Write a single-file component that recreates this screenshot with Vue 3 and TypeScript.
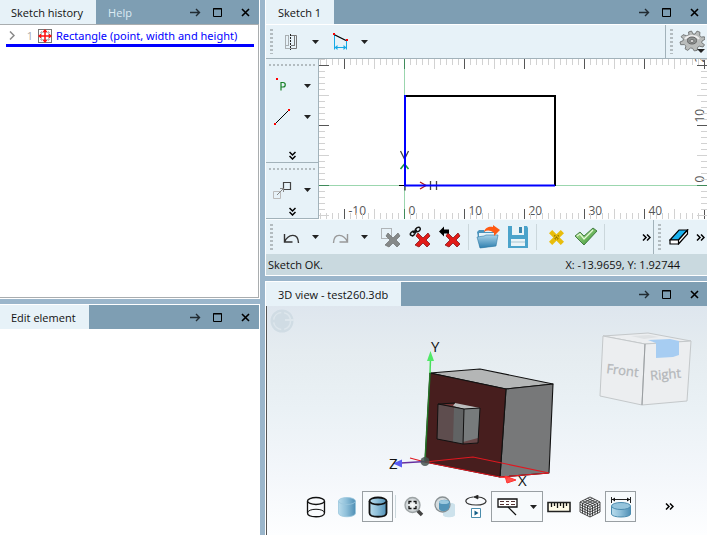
<script setup lang="ts">
import { computed, onMounted, onUnmounted, ref } from 'vue'

interface Tick {
  at: number
  size: number
  kind: string
  label: string
}

// One drawing unit spans six pixels on both rulers.
const unit = 6
const originX = 85.5
const originY = 126.5

const canvas = ref<SVGSVGElement | null>(null)
const canvasWidth = ref(388)

function measure() {
  if (canvas.value) canvasWidth.value = canvas.value.clientWidth
}

onMounted(() => {
  measure()
  window.addEventListener('resize', measure)
})
onUnmounted(() => window.removeEventListener('resize', measure))

function ruler(from: number, to: number, origin: number, direction: number): Tick[] {
  const ticks: Tick[] = []
  for (let n = from; n <= to; n++) {
    const major = n % 10 === 0
    ticks.push({
      at: origin + direction * n * unit,
      size: n % 5 === 0 ? 10 : 6,
      kind: n === 0 ? 'tick zero' : major ? 'tick major' : 'tick',
      label: major ? String(n) : '',
    })
  }
  return ticks
}

// A number is only written where the whole of it fits beside its tick.
const across = computed(() =>
  ruler(-14, Math.floor((canvasWidth.value - originX) / unit), originX, 1).map((t) =>
    t.at + 24 > canvasWidth.value ? { ...t, label: '' } : t,
  ),
)
const upward = ruler(-5, 21, originY, -1)

const windowActions = [
  { name: 'Move', icon: '#i-arrow' },
  { name: 'Maximize', icon: '#i-max' },
  { name: 'Close', icon: '#i-close' },
]

const editActions = [
  { name: 'Delete selection', icon: '#i-del-sel' },
  { name: 'Delete constraints', icon: '#i-del-link' },
  { name: 'Delete last', icon: '#i-del-back' },
]
</script>

<template>
  <svg class="symbols" width="0" height="0" aria-hidden="true">
    <defs>
      <linearGradient id="g-cyl"><stop offset="0" stop-color="#b9dcec" /><stop offset=".45" stop-color="#8fc0da" /><stop offset="1" stop-color="#4f8fb5" /></linearGradient>
      <linearGradient id="g-blue" x2="0" y2="1"><stop offset="0" stop-color="#a9d3ea" /><stop offset="1" stop-color="#2e7fae" /></linearGradient>
      <linearGradient id="g-green" x2="1" y2="1"><stop offset="0" stop-color="#b8e69a" /><stop offset="1" stop-color="#2f8f2c" /></linearGradient>
      <radialGradient id="g-lens"><stop offset="0" stop-color="#fff" /><stop offset="1" stop-color="#c3cacd" /></radialGradient>
    </defs>
    <symbol id="i-arrow" viewBox="0 0 11 11"><path d="M0 5.5h9M6 2l3.5 3.5L6 9" fill="none" stroke="#222c33" stroke-width="1.4" /></symbol>
    <symbol id="i-max" viewBox="0 0 11 11"><path d="M1.5 1.5h8v8h-8zM1 2h9" fill="none" stroke="#000" /></symbol>
    <symbol id="i-close" viewBox="0 0 11 11"><path d="M2 2l7 7M9 2L2 9" stroke="#000" stroke-width="1.6" /></symbol>
    <symbol id="i-caret" viewBox="0 0 7 4"><path d="M0 0h7L3.5 4z" fill="#222" /></symbol>
    <symbol id="i-more" viewBox="0 0 9 7"><path d="M1 .5l3 3-3 3M5 .5l3 3-3 3" fill="none" stroke="#000" stroke-width="1.5" /></symbol>
    <symbol id="i-down" viewBox="0 0 7 9"><path d="M.5 1l3 3 3-3M.5 5l3 3 3-3" fill="none" stroke="#000" stroke-width="1.5" /></symbol>
    <symbol id="i-cross" viewBox="0 0 14 14"><path d="M3 0l4 4 4-4 3 3-4 4 4 4-3 3-4-4-4 4-3-3 4-4-4-4z" fill="currentColor" /><path d="M5 5l4 4M9 5l-4 4" stroke="#8f7400" stroke-width="1.5" stroke-dasharray="1 1" /></symbol>
    <symbol id="i-del-sel" viewBox="0 0 22 22">
      <path d="M2.5 2.500h10v10h-10z" fill="none" stroke="#777" stroke-dasharray="1 1" />
      <path d="M9 7l5 5 5-5 2 3-4 4 4 4-3 3-4-4-4 4-4-2 5-5-4-4z" fill="#858989" stroke="#6b6f6f" stroke-width=".7" />
    </symbol>
    <symbol id="i-del-link" viewBox="0 0 22 22">
      <path d="M9 7l5 5 5-5 2 3-4 4 4 4-3 3-4-4-4 4-4-2 5-5-4-4z" fill="#e11b18" stroke="#851515" stroke-width=".8" />
      <path d="M1.500 9c-1-2 2-4 4-4 2 1 0 4-2 5zM6 5c0-3 4-5 5-3s-1 4-4 4M4 7l4-3" fill="none" stroke="#111" stroke-width="1.5" />
    </symbol>
    <symbol id="i-del-back" viewBox="0 0 22 22">
      <path d="M9 7l5 5 5-5 2 3-4 4 4 4-3 3-4-4-4 4-4-2 5-5-4-4z" fill="#e11b18" stroke="#851515" stroke-width=".8" />
      <path d="M0 5.500l5-5v3h5v4H5v3z" fill="#000" />
    </symbol>
    <symbol id="i-cyl-body" viewBox="0 0 20 22"><path d="M1.500 5v12c0 5 17 5 17 0V5" /><ellipse cx="10" cy="5" rx="8.500" ry="3.500" /></symbol>
  </svg>

  <main class="workspace">
    <div class="column left">
      <section class="panel history" aria-label="Sketch history">
        <header class="titlebar">
          <button class="tab active" type="button">Sketch history</button>
          <button class="tab" type="button">Help</button>
          <span class="space"></span>
          <button v-for="a in windowActions" :key="a.name" class="win" type="button" :aria-label="a.name"><svg width="11" height="11"><use :href="a.icon" /></svg></button>
        </header>
        <div class="body">
          <div class="entry">
            <button class="expand" type="button" aria-label="Expand"><svg width="6" height="9"><path d="M1 .5l4 4-4 4" fill="none" stroke="#888" stroke-width="1.500" /></svg></button>
            <span class="number">1</span>
            <svg class="entry-icon" width="14" height="14"><rect x=".5" y=".5" width="13" height="13" fill="#fff" stroke="#777" /><path d="M3.500 2v10M10.500 2v10M2 3.500h10M2 10.500h10" stroke="#bbb" fill="none" /><path d="M1 7h12M7 1v12" stroke="#f11" stroke-width="1.500" /><path d="M7 0l2.500 3h-5zM7 14l2.500-3h-5zM0 7l3-2.500v5zM14 7l-3-2.500v5z" fill="#f11" /></svg>
            <a href="#rectangle">Rectangle (point, width and height)</a>
          </div>
        </div>
      </section>

      <section class="panel edit" aria-label="Edit element">
        <header class="titlebar">
          <button class="tab active" type="button">Edit element</button>
          <span class="space"></span>
          <button v-for="a in windowActions" :key="a.name" class="win" type="button" :aria-label="a.name"><svg width="11" height="11"><use :href="a.icon" /></svg></button>
        </header>
        <div class="body"></div>
      </section>
    </div>

    <div class="column right">
      <section class="panel sketch" aria-label="Sketch 1">
        <header class="titlebar">
          <button class="tab active" type="button">Sketch 1</button>
          <span class="space"></span>
          <button v-for="a in windowActions" :key="a.name" class="win" type="button" :aria-label="a.name"><svg width="11" height="11"><use :href="a.icon" /></svg></button>
        </header>

        <div class="toolbar top">
          <i class="grip"></i>
          <button class="tool wide" type="button" aria-label="Mirror">
            <svg width="14" height="16"><path d="M1.500 1v14M4.500 1v11M1 1.500h4M1 11.500h4M1 14.500h6" stroke="#a9afb2" fill="none" /><path d="M6.500 0v16" stroke="#222" stroke-dasharray="2 1" /><path d="M7 1.500h5.500v13H7M10.500 1v11M7 11.500h4" stroke="#777" fill="none" /></svg>
          </button>
          <button class="drop" type="button" aria-label="Mirror options"><svg width="7" height="4"><use href="#i-caret" /></svg></button>
          <button class="tool wide" type="button" aria-label="Dimension">
            <svg width="15" height="17"><path d="M1.500 1v15.500M13.500 7v9.500M2 14.500h11" stroke="#16a9e6" /><path d="M1.500 14.500l3-2.500v5zM13.500 14.500l-3-2.500v5z" fill="#16a9e6" /><path d="M1 1.500l12 6" stroke="#000" stroke-width="1.300" /><path d="M0 0h2v2H0zM13 6h2v2h-2z" fill="#f00" /></svg>
          </button>
          <button class="drop" type="button" aria-label="Dimension options"><svg width="7" height="4"><use href="#i-caret" /></svg></button>
          <span class="space"></span>
          <div class="bar-end">
            <i class="grip"></i>
            <button class="tool" type="button" aria-label="Settings">
              <svg width="26" height="24" viewBox="0 0 26 24"><path d="M10 5l-.5-3 3-1 1.500 3 2 .1 2-3 3 1.200-.4 3.200 1.800 1.500 3-.2.600 2.500-3 1.700-.3 1.800 2.800 1.900-1.500 2.300-3.600-.8-1.900 1.200-.3 3-3 .5-1.700-2.700-2.200-.1-2.600 2.300-2.600-1.500.8-2.800-1.600-1.500-3.600.1L1 12l3.200-1.400.2-1.900L2 6.800 4 4.700l3.500 1z" fill="#b9bcbb" stroke="#6d7070" stroke-width=".9" /><path d="M6 9c3-4 11-4 14 0" fill="none" stroke="#eee" stroke-width="2" /><ellipse cx="13" cy="10.500" rx="4.500" ry="3.500" fill="#909594" stroke="#666" /><ellipse cx="13" cy="11" rx="2" ry="1.500" fill="#ddd" stroke="#555" stroke-width=".7" /><path d="M18 19h8l-4 4z" fill="#222" /></svg>
            </button>
          </div>
        </div>

        <div class="drafting">
          <div class="palette">
            <div class="palette-group grow">
              <i class="grip flat"></i>
              <div class="palette-row">
                <button class="tool" type="button" aria-label="Point"><svg width="18" height="18"><path d="M3 1h2v2H3z" fill="#f00" /><path d="M8 13.500V5.500h2c3 0 3 4.500 0 4.500H8" fill="none" stroke="#178026" stroke-width="1.200" /></svg></button>
                <button class="drop" type="button" aria-label="Point options"><svg width="7" height="4"><use href="#i-caret" /></svg></button>
              </div>
              <div class="palette-row">
                <button class="tool" type="button" aria-label="Line"><svg width="18" height="18"><path d="M2 16L16 2" stroke="#000" /><path d="M1 15h2v2H1zM15 1h2v2h-2z" fill="#f00" /></svg></button>
                <button class="drop" type="button" aria-label="Line options"><svg width="7" height="4"><use href="#i-caret" /></svg></button>
              </div>
              <button class="more-down" type="button" aria-label="More drawing tools"><svg width="7" height="9"><use href="#i-down" /></svg></button>
            </div>
            <div class="palette-group">
              <i class="grip flat"></i>
              <div class="palette-row">
                <button class="tool" type="button" aria-label="Move copy"><svg width="20" height="20"><path d="M11.500 2.500h7v7h-7z" fill="none" stroke="#444" stroke-width="1.200" /><path d="M1.500 11.500h7v7h-7z" fill="none" stroke="#bbb" /><path d="M5 15l6-6M8 8.500h3.500V12" fill="none" stroke="#888" /></svg></button>
                <button class="drop" type="button" aria-label="Move options"><svg width="7" height="4"><use href="#i-caret" /></svg></button>
              </div>
              <button class="more-down" type="button" aria-label="More transform tools"><svg width="7" height="9"><use href="#i-down" /></svg></button>
            </div>
          </div>

          <svg ref="canvas" class="canvas" role="img" aria-label="Sketch canvas">
            <path class="axis" d="M85.500 0v160M0 126.500h4000" />
            <g v-for="t in across" :key="t.at">
              <path :class="t.kind" :d="`M${t.at} 0v${t.size}M${t.at} 160v-${t.size}`" />
              <text v-if="t.label" :x="t.at + 4" y="156">{{ t.label }}</text>
            </g>
            <path v-for="t in upward" :key="t.at" :class="t.kind" :d="`M0 ${t.at}h${t.size}`" />
            <svg x="100%" overflow="visible">
              <g v-for="t in upward" :key="t.at">
                <path :class="t.kind" :d="`M0 ${t.at}h-${t.size}`" />
                <text v-if="t.label" :transform="`translate(-3 ${t.at - 3}) rotate(-90)`">{{ t.label }}</text>
              </g>
            </svg>
            <path d="M85 37h151v90" fill="none" stroke="#000" stroke-width="2" />
            <path d="M80 126.500h6v5" fill="none" stroke="#000" />
            <path d="M81.500 110l4-5 4 5" fill="none" stroke="#1a9a3c" stroke-width="1.500" />
            <path d="M101 123l6 3.500-6 3.500" fill="none" stroke="#b11a1a" stroke-width="1.300" />
            <path d="M81.500 92l4 8 4-8M111.500 122v9M117.500 122v9" fill="none" stroke="#444" stroke-width="1.300" />
            <path d="M86 36v90.500h150" fill="none" stroke="#00f" stroke-width="2" />
          </svg>
        </div>

        <div class="toolbar bottom">
          <i class="grip"></i>
          <button class="tool wide" type="button" aria-label="Undo"><svg width="17" height="13"><path d="M1.500 3v8h8M1.500 11C5 3 15 1 15.500 12" fill="none" stroke="#333" stroke-width="1.400" /></svg></button>
          <button class="drop" type="button" aria-label="Undo list"><svg width="7" height="4"><use href="#i-caret" /></svg></button>
          <button class="tool wide" type="button" aria-label="Redo"><svg width="17" height="13"><path d="M15.500 3v8h-8M15.500 11C12 3 2 1 1.500 12" fill="none" stroke="#999" stroke-width="1.400" /></svg></button>
          <button class="drop" type="button" aria-label="Redo list"><svg width="7" height="4"><use href="#i-caret" /></svg></button>
          <button v-for="a in editActions" :key="a.name" class="tool" type="button" :aria-label="a.name"><svg width="22" height="22"><use :href="a.icon" /></svg></button>
          <i class="divider"></i>
          <button class="tool" type="button" aria-label="Open"><svg width="24" height="24" viewBox="0 0 24 24"><path d="M1 7l2-2h5l1 2h10l1 14-16 2z" fill="#4b94bd" /><path d="M3 8h15v8H3z" fill="#e8f4fa" /><path d="M4 23L1 12l7-1 2-1h12l-2 11z" fill="url(#g-blue)" stroke="#2f7ba6" stroke-width=".6" /><path d="M8 7c1-5 6-6 9-5V0l7 5-6 6V8c-4-3-7-3-10-1z" fill="#ff5a14" /></svg></button>
          <button class="tool" type="button" aria-label="Save"><svg width="22" height="24" viewBox="0 0 22 24"><path d="M1 1h19l1 2v20H1z" fill="#4ba3cb" /><path d="M5 1h12v9H5zM4 14h14v7H4z" fill="#eaf4f8" /><path d="M12 2h3v6h-3z" fill="#3c88ae" /><path d="M4 17h14" stroke="#aac6d2" /></svg></button>
          <i class="divider"></i>
          <button class="tool cancel" type="button" aria-label="Cancel"><svg width="15" height="15"><use href="#i-cross" /></svg></button>
          <button class="tool" type="button" aria-label="Accept"><svg width="24" height="20"><path d="M1 9l5-4 4 4 9-8 4 3-13 14z" fill="url(#g-green)" stroke="#39743a" stroke-width=".9" /><path d="M3 9l3-2 4 5 9-9" fill="none" stroke="#e3f7d5" stroke-width="1.300" /></svg></button>
          <i class="divider"></i>
          <span class="space"></span>
          <button class="more" type="button" aria-label="More actions"><svg width="9" height="7"><use href="#i-more" /></svg></button>
          <div class="bar-end">
            <i class="grip"></i>
            <button class="tool wide" type="button" aria-label="Erase"><svg width="20" height="16"><path d="M1 11L10 1h8.500L9.500 11z" fill="#19b1ee" stroke="#000" stroke-width="1.200" /><path d="M1 11v4h8.500v-4zM9.500 15L18.500 5V1l-9 10z" fill="#fff" stroke="#000" stroke-width="1.200" /></svg></button>
            <button class="more" type="button" aria-label="More erase tools"><svg width="9" height="7"><use href="#i-more" /></svg></button>
          </div>
        </div>

        <footer class="status"><span>Sketch OK.</span><output>X: -13.9659, Y: 1.92744</output></footer>
      </section>

      <section class="panel view" aria-label="3D view">
        <header class="titlebar">
          <button class="tab active" type="button">3D view - test260.3db</button>
          <span class="space"></span>
          <button v-for="a in windowActions" :key="a.name" class="win" type="button" :aria-label="a.name"><svg width="11" height="11"><use :href="a.icon" /></svg></button>
        </header>
        <div class="stage">
          <svg class="scene" width="300" height="200" viewBox="267 306 300 200" role="img" aria-label="Solid model">
            <circle cx="282" cy="321" r="11.500" fill="#d0dce4" /><circle cx="282" cy="321" r="8.500" fill="none" stroke="#dde6ec" stroke-width="1.500" stroke-dasharray="11 3" /><path d="M285 320h9" stroke="#dde6ec" stroke-width="2" />
            <g stroke="#111" stroke-linejoin="round" stroke-width="1.100">
              <path d="M430 373l50-4 73 15-47 5z" fill="#b4b6b6" />
              <path d="M506 389l47-5-4 89-49 4z" fill="#777879" />
              <path d="M430 373l76 16-6 88-75-15z" fill="#471e1e" />
            </g>
            <path d="M438 403l17 1-2 4 11 1z" fill="#6d3434" /><path d="M455 403l25 5-16 1-11-3z" fill="#bbbdbd" />
            <path d="M438 404l26 5-1 35-26-5z" fill="#5e4d4e" /><path d="M454 407l10 2-1 35-10-2z" fill="#616364" /><path d="M464 409l16-1-2 35-15 1z" fill="#777b7c" /><path d="M463 442l15-4v5l-15 1z" fill="#684748" />
            <path d="M455 403l-17 1 26 5 16-1-2 35-15 1-26-5 1-35M464 409l-1 35" fill="none" stroke="#111" />
            <path d="M425 461l5-88" stroke="#267527" stroke-width="1.500" /><path d="M430 373l.5-14" stroke="#48de5b" stroke-width="1.500" /><path d="M430.500 351l3.500 10h-7z" fill="#50e967" />
            <path d="M410 458l15 4 75 15 49-4M425 462l48-5 76 16" fill="none" stroke="#e01820" stroke-width="1.100" />
            <path d="M500 477l8 1M505 476l11 4-9 3z" fill="#ff5149" stroke="#f33" />
            <path d="M401 463l24-1.500" stroke="#6630a0" stroke-width="1.500" /><path d="M393 463.500l9-4v8z" fill="#5b5bf2" />
            <circle cx="425" cy="461.500" r="4.500" fill="#465450" opacity=".85" />
            <g font-size="15" fill="#111"><text x="431" y="352">Y</text><text x="389" y="469">Z</text><text x="518" y="486">X</text></g>
          </svg>
          <svg class="nav-cube" width="94" height="78" viewBox="598 330 94 78" role="img" aria-label="View cube">
            <g stroke="#c4c8ca" fill="#eceef0"><path d="M603 336l45-3 43 8-46 3z" /><path d="M603 336l42 8-3 61-42-9z" /><path d="M645 344l46-3-4 60-45 4z" /></g>
            <path d="M631 336l18-1 10 2-15 2z" fill="#dfe2e4" />
            <path d="M645 344l-3 61" stroke="#999da0" /><path d="M648 340l22-1 9 2v14l-6 2-17 1v-15z" fill="#a7cdf2" />
            <g font-size="13" fill="#b4b7ba" stroke="#b4b7ba" stroke-width=".3" text-anchor="middle"><text transform="translate(622 375) rotate(7)">Front</text><text transform="translate(666 379) rotate(-5)">Right</text></g>
          </svg>

          <div class="view-tools">
            <button class="vt" type="button" aria-label="Wireframe"><svg width="20" height="22" fill="none" stroke="#111" stroke-width="1.300"><use href="#i-cyl-body" /><path d="M1.500 17c0-5 17-5 17 0" stroke-width="1" /></svg></button>
            <button class="vt" type="button" aria-label="Shaded"><svg width="20" height="22" fill="url(#g-cyl)" stroke="#9bc6dd" stroke-width=".8"><use href="#i-cyl-body" /></svg></button>
            <button class="vt boxed" type="button" aria-label="Shaded with edges" aria-pressed="true"><svg width="20" height="22" fill="url(#g-cyl)" stroke="#111" stroke-width="1.800"><use href="#i-cyl-body" /></svg></button>
            <i class="divider slim"></i>
            <button class="vt" type="button" aria-label="Zoom to fit"><svg width="20" height="22"><path d="M13 14l5 5" stroke="#444" stroke-width="3.500" /><circle cx="8.500" cy="9" r="7.500" fill="url(#g-lens)" stroke="#9da3a5" stroke-width="1.300" /><path d="M5 8V5.500h2.500M9.500 5.500H12V8M12 10v2.500H9.500M7.500 12.500H5V10" fill="none" stroke="#111" stroke-width="1.300" /></svg></button>
            <button class="vt" type="button" aria-label="Transparency"><svg width="22" height="22"><path d="M9 9v10c0 3 12 3 12 0V9c0-3-12-3-12 0" fill="#cde2ec" /><circle cx="8.500" cy="8.500" r="7.500" fill="#d5dcdf" stroke="#899093" stroke-width="1.300" /><path d="M5 6v7c2 4 9 2 10-1l1-6c-2-3-9-3-11 0z" fill="#5294b8" /><ellipse cx="10" cy="6" rx="5" ry="2" fill="#9bc9df" /></svg></button>
            <button class="vt" type="button" aria-label="Rotate"><svg width="22" height="24"><path d="M13 2C24 3 24 10 11 10S-2 3 8 2" fill="none" stroke="#333" stroke-width="1.200" /><path d="M8 2h5M13 0v4l-4-2z" stroke="#222" fill="#222" stroke-width=".7" /><path d="M6.500 13.500h9v9h-9z" fill="#fff" stroke="#4a8cac" /><path d="M9.500 15.500l4 2.500-4 2.500z" fill="#155f87" /></svg></button>
            <button class="vt split boxed" type="button" aria-label="Labels"><svg width="22" height="20"><path d="M1 2h19v8H1z" fill="#fff" stroke="#111" stroke-width="1.300" /><path d="M3 4.500h4M9 4.500h3M14 4.500h4M3 7.500h4M9 7.500h3M14 7.500h4" stroke="#533" /><path d="M11 10l8 8" stroke="#111" stroke-width="1.200" /></svg><svg width="7" height="4"><use href="#i-caret" /></svg></button>
            <button class="vt" type="button" aria-label="Measure"><svg width="24" height="12"><path d="M1 1.500h22v9H1z" fill="#fffbe8" stroke="#222" stroke-width="1.600" /><path d="M4.500 2v4M7.500 2v3M10.500 2v5M13.500 2v3M16.500 2v5M19.500 2v3" stroke="#111" stroke-width="1.300" /></svg></button>
            <button class="vt" type="button" aria-label="Mesh"><svg width="22" height="22"><path d="M1 6L11 1l10 5v10l-10 5-10-5zM1 6l10 5 10-5M11 11v10M1 8.500l10 5 10-5M1 11l10 5 10-5M1 13.500l10 5 10-5M3.500 4.800l10 5v10M6 3.500l10 5v10M8.500 2.300l10 5v10M18.500 4.800l-10 5v10M16 3.500l-10 5v10M13.500 2.300l-10 5v10" fill="none" stroke="#222" stroke-width=".8" /></svg></button>
            <button class="vt boxed" type="button" aria-label="Show dimensions" aria-pressed="true"><svg width="22" height="24"><path d="M1.500 2v6M20.500 2v6M2 4.500h18" stroke="#222" /><path d="M2 4.500L5 2.500v4zM20 4.500l-3-2v4z" fill="#111" /><path d="M1.500 11v8c0 4 19 4 19 0v-8" fill="url(#g-cyl)" stroke="#4c8caf" /><ellipse cx="11" cy="11" rx="9.500" ry="3.500" fill="#95c4dc" stroke="#4c8caf" /></svg></button>
            <button class="vt" type="button" aria-label="More view tools"><svg width="9" height="7"><use href="#i-more" /></svg></button>
          </div>
        </div>
      </section>
    </div>
  </main>
</template>

<style>
body {
  margin: 0;
}
</style>

<style scoped>
.workspace,
.workspace button {
  font: 12px/16px 'Open Sans', 'Noto Sans', sans-serif;
}
.workspace {
  display: flex;
  gap: 5px;
  min-height: 100vh;
  background: #9bb6cb;
  color: #111;
}
.workspace * {
  box-sizing: border-box;
}
.symbols {
  position: absolute;
}
button {
  display: flex;
  align-items: center;
  justify-content: center;
  margin: 0;
  padding: 0;
  border: 0;
  background: none;
  color: inherit;
}
svg {
  display: block;
  flex: none;
}
.column {
  display: flex;
  flex-direction: column;
  gap: 5px;
}
.left {
  flex: 0 0 260px;
}
.right {
  flex: 1;
  min-width: 0;
}
.panel {
  display: flex;
  flex-direction: column;
}
.left .panel {
  border-right: 1px solid #fff;
}
.right .panel {
  border-left: 1px solid #fff;
}
.history {
  height: 299px;
  border-bottom: 1px solid #fff;
}
.edit,
.view {
  flex: 1;
  border-top: 1px solid #fff;
}
.titlebar {
  display: flex;
  height: 24px;
  flex: none;
  padding-right: 3px;
  background: #7e9eb3;
}
.right .titlebar {
  padding-right: 2px;
}
.workspace .tab {
  padding: 2px 12px 0;
  font-size: 11px;
  color: #dcebf3;
}
.workspace .tab.active {
  padding-right: 13px;
  background: #e7f2f8;
  color: #111;
}
.left .tab.active {
  padding-left: 11px;
}
.space {
  flex: 1;
}
.win {
  width: 22px;
}
.win:last-child {
  margin-left: 6px;
}
.body {
  flex: 1;
  background: #fff;
}
.history .body {
  padding: 0 4px 0 6px;
  border: solid #a9adaf;
  border-width: 1px 1px 1px 0;
}
.entry {
  display: flex;
  align-items: center;
  height: 22px;
  padding-top: 2px;
  border-bottom: 3px solid #00f;
  font-size: 11px;
}
.expand {
  width: 12px;
}
.number {
  width: 20px;
  padding-right: 5px;
  text-align: right;
  color: #aaa;
}
.entry a {
  margin-left: 4px;
  color: #00f;
  font-family: 'Noto Sans', 'Open Sans', sans-serif;
  text-decoration: none;
  white-space: nowrap;
}
.toolbar {
  display: flex;
  flex: none;
  background: #e7f2f8;
}
.top {
  height: 35px;
  border-top: 1px solid #fff;
  border-bottom: 1px solid #a2b2ba;
}
.bottom {
  height: 35px;
  border-top: 1px solid #f8fcfe;
}
.bar-end {
  display: flex;
  border-left: 1px solid #a2b2ba;
}
.grip {
  width: 3px;
  margin: 4px;
  background: repeating-linear-gradient(#b3bcc0 0 2px, transparent 2px 4px);
}
.grip.flat {
  width: auto;
  height: 2px;
  margin: 5px 3px 4px;
  background: repeating-linear-gradient(90deg, #b3bcc0 0 2px, transparent 2px 4px);
}
.tool {
  width: 30px;
}
.tool.wide {
  width: 28px;
}
.drop {
  width: 21px;
}
.more {
  width: 14px;
}
.cancel {
  color: #e8bd0c;
}
.divider {
  width: 1px;
  margin: 4px 4px 4px 3px;
  background: #cbd7dc;
}
.divider.slim {
  margin: 4px 2px;
}
.drafting {
  display: flex;
  height: 160px;
}
.palette {
  display: flex;
  flex-direction: column;
  flex: 0 0 53px;
  border-right: 1px solid #a2b2ba;
  background: #e7f2f8;
}
.palette-group {
  display: flex;
  flex-direction: column;
  border-bottom: 1px solid #a2b2ba;
}
.grow {
  flex: 1;
}
.palette-row {
  display: flex;
  justify-content: flex-end;
  height: 31px;
}
.more-down {
  height: 13px;
  margin-top: auto;
}
.canvas {
  flex: 1;
  min-width: 0;
  height: 160px;
  overflow: hidden;
  background: #fff;
  font-size: 12px;
}
.canvas text {
  fill: #555;
}
.axis {
  stroke: #9bd6ae;
}
.tick {
  stroke: #d2d2d2;
}
.tick.major {
  stroke: #555;
}
.tick.zero {
  stroke: #3f8a5a;
}
.status {
  display: flex;
  justify-content: space-between;
  padding: 3px 27px 2px 2px;
  border-bottom: 1px solid #fff;
  background: #c9d9df;
  font-size: 11px;
}
.stage {
  position: relative;
  display: flex;
  flex: 1;
  flex-direction: column;
  justify-content: flex-end;
  border-left: 1px solid #555;
  background: linear-gradient(#dee6ee, #e5ecf0 20%, #eaf1f5 45%, #f4f7fb 75%, #fdfeff);
}
.scene {
  position: absolute;
  top: 0;
  left: 0;
}
.nav-cube {
  position: absolute;
  top: 24px;
  right: 15px;
}
.view-tools {
  position: relative;
  display: flex;
  padding: 0 0 13px 33px;
}
.vt {
  width: 31px;
  height: 31px;
}
.vt:last-child {
  margin-left: 18px;
}
.boxed {
  border: 1px solid #999fa3;
  background: #f7fafc;
}
.split {
  width: 52px;
  gap: 11px;
}
</style>
